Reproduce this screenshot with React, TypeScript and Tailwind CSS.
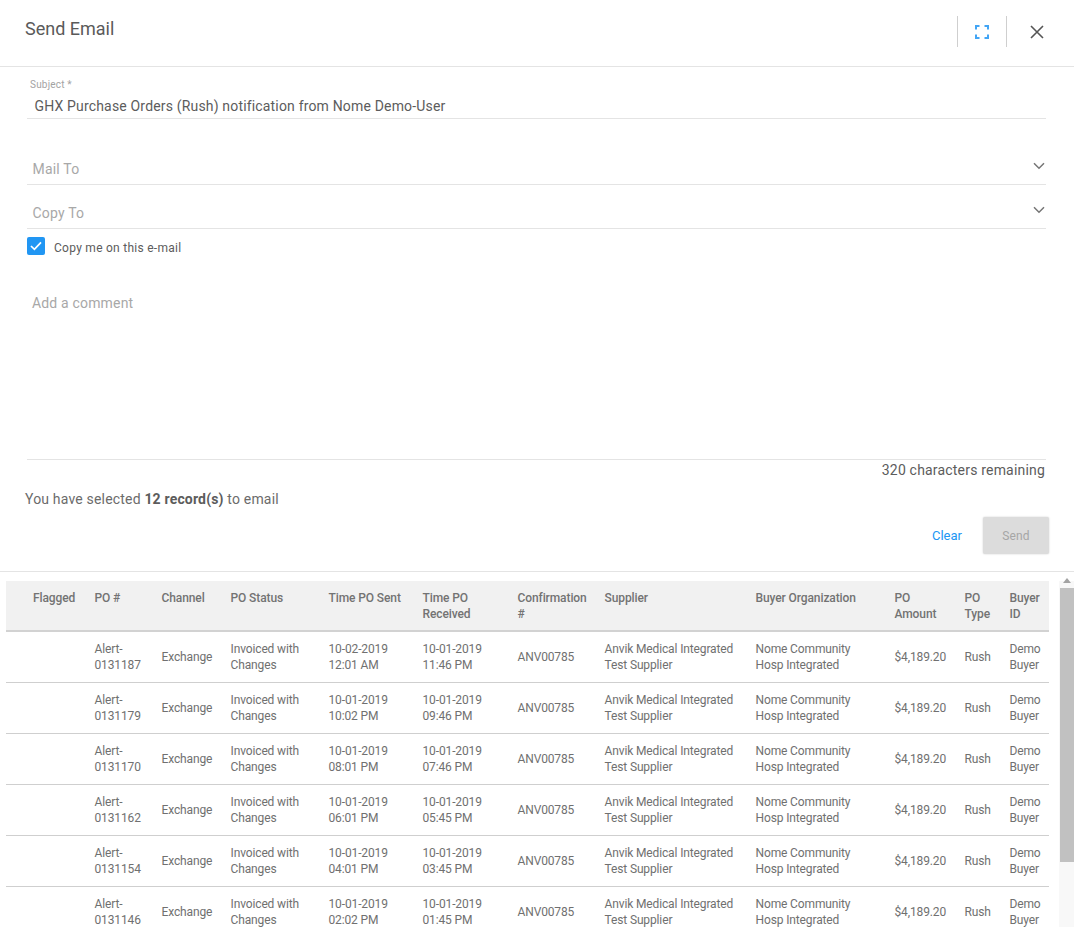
import React from "react";

const cols = [
  "w-[88.5px] pl-[27px]",
  "w-[67px]",
  "w-[69px]",
  "w-[98px]",
  "w-[94px]",
  "w-[95px]",
  "w-[87px]",
  "w-[151px]",
  "w-[139px]",
  "w-[70px]",
  "w-[45px]",
  "w-[39.5px]",
];

const headers = [
  "Flagged",
  "PO #",
  "Channel",
  "PO Status",
  "Time PO Sent",
  "Time PO Received",
  "Confirmation #",
  "Supplier",
  "Buyer Organization",
  "PO Amount",
  "PO Type",
  "Buyer ID",
];

const rows = [
  ["0131187", "10-02-2019", "12:01 AM", "10-01-2019", "11:46 PM"],
  ["0131179", "10-01-2019", "10:02 PM", "10-01-2019", "09:46 PM"],
  ["0131170", "10-01-2019", "08:01 PM", "10-01-2019", "07:46 PM"],
  ["0131162", "10-01-2019", "06:01 PM", "10-01-2019", "05:45 PM"],
  ["0131154", "10-01-2019", "04:01 PM", "10-01-2019", "03:45 PM"],
  ["0131146", "10-01-2019", "02:02 PM", "10-01-2019", "01:45 PM"],
];

function Chevron() {
  return (
    <svg width="12" height="8" viewBox="0 0 12 8" fill="none" stroke="#757575" strokeWidth="1.5">
      <path d="M1 1.2 L6 6.2 L11 1.2" />
    </svg>
  );
}

function Select({ label }: { label: string }) {
  return (
    <div className="flex h-[44px] items-start justify-between border-b border-[#e4e4e4] pl-[5.5px] pt-[17px]">
      <span className="pt-[0.5px] text-[14px] leading-[20px] tracking-[0.2px] text-[#a8a8a8]">{label}</span>
      <span className="pr-[1px] pt-[4px]">
        <Chevron />
      </span>
    </div>
  );
}

export default function App() {
  return (
    <div
      className="flex h-[927px] w-[1074px] flex-col overflow-hidden bg-white text-[#555]"
      style={{ fontFamily: "Roboto, sans-serif" }}
    >
      <header className="flex h-[67px] shrink-0 items-start justify-between border-b border-[#e4e4e4] pl-[25px]">
        <h1 className="pt-[17px] text-[18px] font-normal leading-[24px] text-[#5a5a5a]">Send Email</h1>
        <div className="flex items-center pt-[16px]">
          <div className="flex h-[31px] w-[50px] items-center justify-center border-x border-[#cfcfcf]">
            <svg width="14" height="14" viewBox="0 0 14 14" fill="none" stroke="#42a5f5" strokeWidth="2">
              <path d="M1 4.5 V1 H4.5 M9.5 1 H13 V4.5 M13 9.5 V13 H9.5 M4.5 13 H1 V9.5" />
            </svg>
          </div>
          <button className="flex h-[31px] w-[67px] items-center justify-center pr-[7px]">
            <svg width="14" height="14" viewBox="0 0 14 14" fill="none" stroke="#555" strokeWidth="1.6">
              <path d="M1 1 L13 13 M13 1 L1 13" />
            </svg>
          </button>
        </div>
      </header>

      <section className="w-[1046px] shrink-0 pl-[27px]">
        <div className="h-[52px] border-b border-[#e4e4e4] pt-[11px]">
          <div className="pl-[3px] text-[10px] leading-[13px] tracking-[0.2px] text-[#a3a3a3]">Subject *</div>
          <div className="pl-[7.5px] pt-[5px] text-[14px] leading-[20px] tracking-[0.17px] text-[#5c5c5c]">
            GHX Purchase Orders (Rush) notification from Nome Demo-User
          </div>
        </div>
        <div className="h-[22px]" />
        <Select label="Mail To" />
        <Select label="Copy To" />
        <label className="flex h-[36px] items-start pt-[8px]">
          <span className="flex h-[18px] w-[18px] items-center justify-center rounded-[2px] bg-[#2196f3]">
            <svg width="12" height="10" viewBox="0 0 12 10" fill="none" stroke="#fff" strokeWidth="1.7">
              <path d="M1 5 L4.4 8.4 L11 1.4" />
            </svg>
          </span>
          <span className="pl-[9px] pt-[3px] text-[12px] leading-[16px] tracking-[0.27px] text-[#5c5c5c]">
            Copy me on this e-mail
          </span>
        </label>
        <div className="h-[195px] border-b border-[#e4e4e4] pl-[5px] pt-[28px] text-[14px] leading-[20px] tracking-[0.17px] text-[#a8a8a8]">
          Add a comment
        </div>
        <div className="pr-[1px] text-right text-[14px] leading-[20px] tracking-[0.19px] text-[#5c5c5c]">
          320 characters remaining
        </div>
      </section>

      <div className="shrink-0 pl-[25px] pt-[9px] text-[14px] leading-[20px] tracking-[0.18px] text-[#6b6b6b]">
        You have selected <b className="font-bold text-[#5c5c5c]">12 record(s)</b> to email
      </div>

      <div className="flex h-[62px] w-[1049px] shrink-0 items-start justify-end pt-[8px]">
        <span className="pr-[21px] pt-[11px] text-[13px] leading-[16px] text-[#2196f3]">Clear</span>
        <button className="h-[37px] w-[66px] rounded-[2px] bg-[#dcdcdc] text-[12px] tracking-[0.2px] text-[#a6a6a6] shadow-[0_0_2px_rgba(0,0,0,0.2)]">
          Send
        </button>
      </div>

      <div className="flex min-h-0 flex-1 border-t border-[#e4e4e4] pl-[6px] pt-[9px]">
        <div className="w-[1043px] shrink-0">
          <div className="flex h-[51px] items-start border-b-2 border-[#d2d2d2] bg-[#f1f1f1] pt-[9px] text-[12px] font-medium leading-[16px] tracking-[-0.1px] text-[#737373]">
            {headers.map((h, i) => (
              <div key={h} className={`${cols[i]} shrink-0 pr-[10px]`}>
                {h}
              </div>
            ))}
          </div>
          {rows.map((r) => (
            <div
              key={r[0]}
              className="flex h-[51px] items-center border-b border-[#cfcfcf] text-[12px] leading-[16px] tracking-[-0.13px] text-[#707070]"
            >
              <div className={`${cols[0]} shrink-0`} />
              <div className={`${cols[1]} shrink-0`}>
                Alert-
                <br />
                {r[0]}
              </div>
              <div className={`${cols[2]} shrink-0`}>Exchange</div>
              <div className={`${cols[3]} shrink-0`}>
                Invoiced with
                <br />
                Changes
              </div>
              <div className={`${cols[4]} shrink-0`}>
                {r[1]}
                <br />
                {r[2]}
              </div>
              <div className={`${cols[5]} shrink-0`}>
                {r[3]}
                <br />
                {r[4]}
              </div>
              <div className={`${cols[6]} shrink-0`}>ANV00785</div>
              <div className={`${cols[7]} shrink-0`}>
                Anvik Medical Integrated
                <br />
                Test Supplier
              </div>
              <div className={`${cols[8]} shrink-0`}>
                Nome Community
                <br />
                Hosp Integrated
              </div>
              <div className={`${cols[9]} shrink-0`}>$4,189.20</div>
              <div className={`${cols[10]} shrink-0`}>Rush</div>
              <div className={`${cols[11]} shrink-0`}>
                Demo
                <br />
                Buyer
              </div>
            </div>
          ))}
        </div>
        <div className="ml-[10px] flex w-[15px] shrink-0 flex-col items-center bg-[#f8f8f8]">
          <svg width="8" height="5" viewBox="0 0 8 5" className="mt-[-3px] mb-[5px] shrink-0">
            <path d="M4 0 L8 5 H0 Z" fill="#a3a3a3" />
          </svg>
          <div className="h-[274px] w-[14px] bg-[#c1c1c1]" />
        </div>
      </div>
    </div>
  );
}
